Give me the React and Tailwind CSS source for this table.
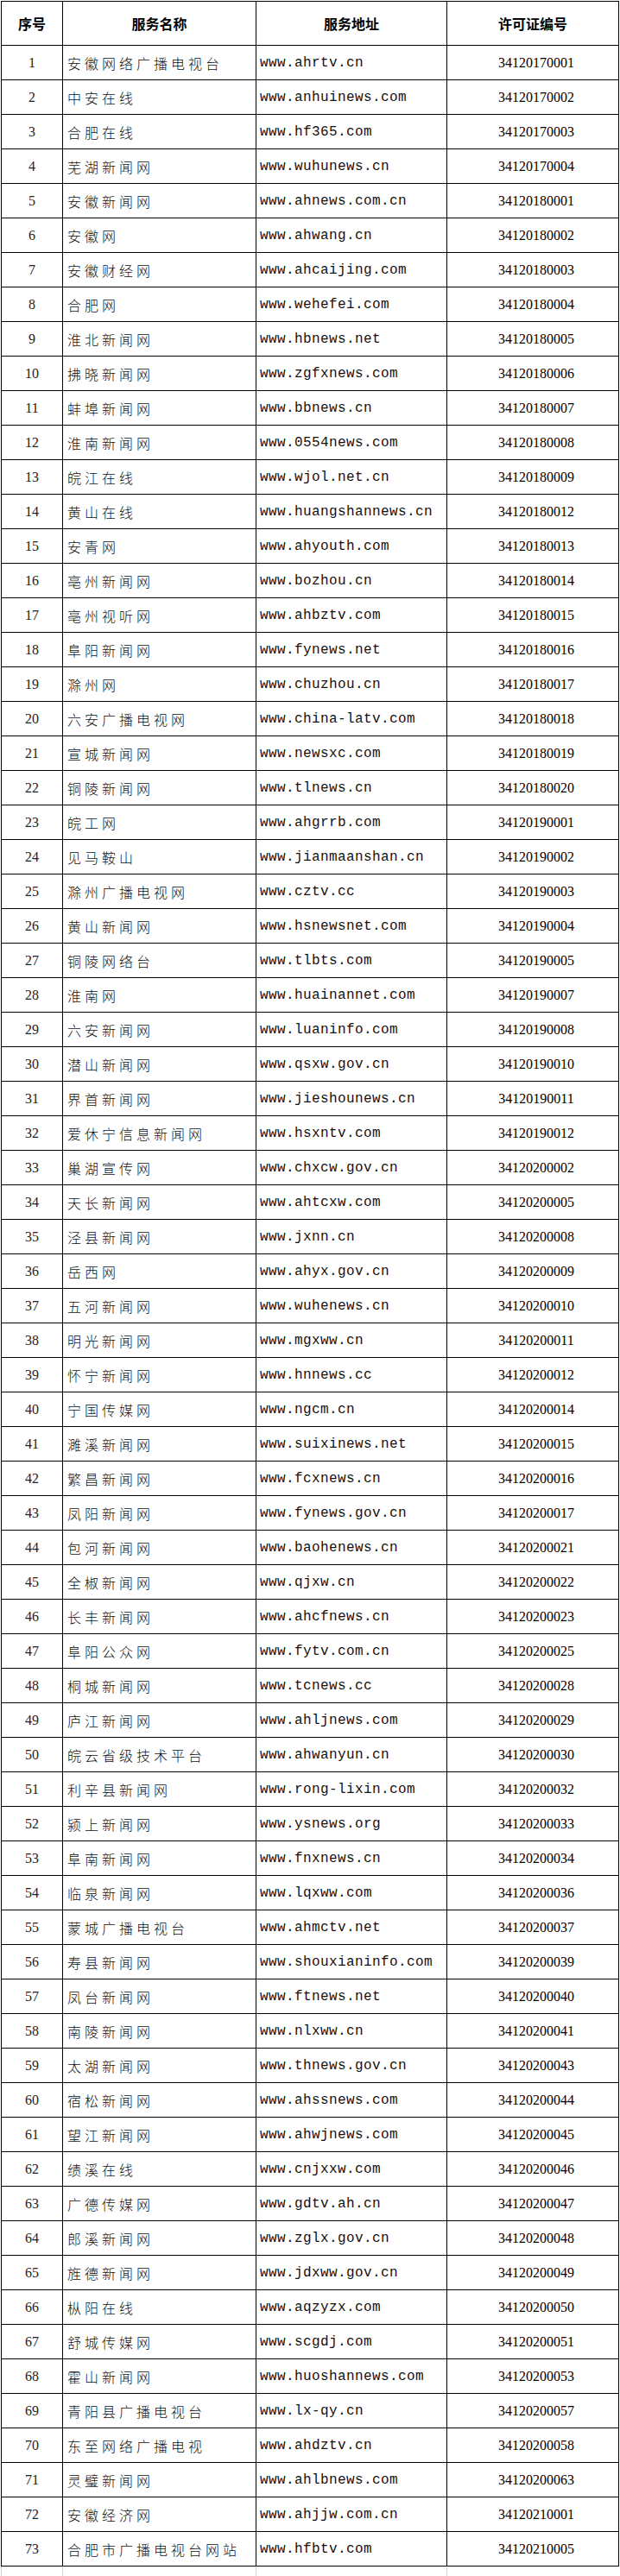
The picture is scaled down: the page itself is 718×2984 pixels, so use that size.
import React from 'react';

const rows = [
    ['安徽网络广播电视台', 'www.ahrtv.cn', '34120170001'],
    ['中安在线', 'www.anhuinews.com', '34120170002'],
    ['合肥在线', 'www.hf365.com', '34120170003'],
    ['芜湖新闻网', 'www.wuhunews.cn', '34120170004'],
    ['安徽新闻网', 'www.ahnews.com.cn', '34120180001'],
    ['安徽网', 'www.ahwang.cn', '34120180002'],
    ['安徽财经网', 'www.ahcaijing.com', '34120180003'],
    ['合肥网', 'www.wehefei.com', '34120180004'],
    ['淮北新闻网', 'www.hbnews.net', '34120180005'],
    ['拂晓新闻网', 'www.zgfxnews.com', '34120180006'],
    ['蚌埠新闻网', 'www.bbnews.cn', '34120180007'],
    ['淮南新闻网', 'www.0554news.com', '34120180008'],
    ['皖江在线', 'www.wjol.net.cn', '34120180009'],
    ['黄山在线', 'www.huangshannews.cn', '34120180012'],
    ['安青网', 'www.ahyouth.com', '34120180013'],
    ['亳州新闻网', 'www.bozhou.cn', '34120180014'],
    ['亳州视听网', 'www.ahbztv.com', '34120180015'],
    ['阜阳新闻网', 'www.fynews.net', '34120180016'],
    ['滁州网', 'www.chuzhou.cn', '34120180017'],
    ['六安广播电视网', 'www.china-latv.com', '34120180018'],
    ['宣城新闻网', 'www.newsxc.com', '34120180019'],
    ['铜陵新闻网', 'www.tlnews.cn', '34120180020'],
    ['皖工网', 'www.ahgrrb.com', '34120190001'],
    ['见马鞍山', 'www.jianmaanshan.cn', '34120190002'],
    ['滁州广播电视网', 'www.cztv.cc', '34120190003'],
    ['黄山新闻网', 'www.hsnewsnet.com', '34120190004'],
    ['铜陵网络台', 'www.tlbts.com', '34120190005'],
    ['淮南网', 'www.huainannet.com', '34120190007'],
    ['六安新闻网', 'www.luaninfo.com', '34120190008'],
    ['潜山新闻网', 'www.qsxw.gov.cn', '34120190010'],
    ['界首新闻网', 'www.jieshounews.cn', '34120190011'],
    ['爱休宁信息新闻网', 'www.hsxntv.com', '34120190012'],
    ['巢湖宣传网', 'www.chxcw.gov.cn', '34120200002'],
    ['天长新闻网', 'www.ahtcxw.com', '34120200005'],
    ['泾县新闻网', 'www.jxnn.cn', '34120200008'],
    ['岳西网', 'www.ahyx.gov.cn', '34120200009'],
    ['五河新闻网', 'www.wuhenews.cn', '34120200010'],
    ['明光新闻网', 'www.mgxww.cn', '34120200011'],
    ['怀宁新闻网', 'www.hnnews.cc', '34120200012'],
    ['宁国传媒网', 'www.ngcm.cn', '34120200014'],
    ['濉溪新闻网', 'www.suixinews.net', '34120200015'],
    ['繁昌新闻网', 'www.fcxnews.cn', '34120200016'],
    ['凤阳新闻网', 'www.fynews.gov.cn', '34120200017'],
    ['包河新闻网', 'www.baohenews.cn', '34120200021'],
    ['全椒新闻网', 'www.qjxw.cn', '34120200022'],
    ['长丰新闻网', 'www.ahcfnews.cn', '34120200023'],
    ['阜阳公众网', 'www.fytv.com.cn', '34120200025'],
    ['桐城新闻网', 'www.tcnews.cc', '34120200028'],
    ['庐江新闻网', 'www.ahljnews.com', '34120200029'],
    ['皖云省级技术平台', 'www.ahwanyun.cn', '34120200030'],
    ['利辛县新闻网', 'www.rong-lixin.com', '34120200032'],
    ['颍上新闻网', 'www.ysnews.org', '34120200033'],
    ['阜南新闻网', 'www.fnxnews.cn', '34120200034'],
    ['临泉新闻网', 'www.lqxww.com', '34120200036'],
    ['蒙城广播电视台', 'www.ahmctv.net', '34120200037'],
    ['寿县新闻网', 'www.shouxianinfo.com', '34120200039'],
    ['凤台新闻网', 'www.ftnews.net', '34120200040'],
    ['南陵新闻网', 'www.nlxww.cn', '34120200041'],
    ['太湖新闻网', 'www.thnews.gov.cn', '34120200043'],
    ['宿松新闻网', 'www.ahssnews.com', '34120200044'],
    ['望江新闻网', 'www.ahwjnews.com', '34120200045'],
    ['绩溪在线', 'www.cnjxxw.com', '34120200046'],
    ['广德传媒网', 'www.gdtv.ah.cn', '34120200047'],
    ['郎溪新闻网', 'www.zglx.gov.cn', '34120200048'],
    ['旌德新闻网', 'www.jdxww.gov.cn', '34120200049'],
    ['枞阳在线', 'www.aqzyzx.com', '34120200050'],
    ['舒城传媒网', 'www.scgdj.com', '34120200051'],
    ['霍山新闻网', 'www.huoshannews.com', '34120200053'],
    ['青阳县广播电视台', 'www.lx-qy.cn', '34120200057'],
    ['东至网络广播电视', 'www.ahdztv.cn', '34120200058'],
    ['灵璧新闻网', 'www.ahlbnews.com', '34120200063'],
    ['安徽经济网', 'www.ahjjw.com.cn', '34120210001'],
    ['合肥市广播电视台网站', 'www.hfbtv.com', '34120210005'],
];

const cols = 'grid grid-cols-[71px_224px_221px_199px]';
const cell = 'flex items-center border-r border-b border-black';

function App() {
    return (
        <div className="bg-white min-h-[2984px] pt-px pl-px">
            <div className={`${cols} w-[716px] border-l border-t border-black`}>
                {['序号', '服务名称', '服务地址', '许可证编号'].map((h) => (
                    <div
                        key={h}
                        className={`${cell} h-[51px] justify-center font-['Noto_Sans_CJK_SC',sans-serif] font-bold text-[16px] text-black`}
                    >
                        {h}
                    </div>
                ))}
                {rows.map(([name, url, code], i) => (
                    <React.Fragment key={code}>
                        <div className={`${cell} h-[40px] justify-center font-['Liberation_Serif',serif] text-[16px] text-[#222]`}>
                            {i + 1}
                        </div>
                        <div className={`${cell} h-[40px] pl-[5px] font-['Noto_Sans_CJK_SC',sans-serif] font-light tracking-[4px] text-[16px] text-[#111] whitespace-nowrap`}>
                            {name}
                        </div>
                        <div className={`${cell} h-[40px] pl-[4px] font-['Liberation_Mono',monospace] tracking-[0.4px] text-[16px] text-[#111] whitespace-nowrap`}>
                            {url}
                        </div>
                        <div className={`${cell} h-[40px] justify-center pl-[8px] font-['Liberation_Serif',serif] text-[16px] text-black`}>
                            {code}
                        </div>
                    </React.Fragment>
                ))}
            </div>
            <div className={`${cols} w-[716px] h-[11px] border-l border-[#d4d4d4]`}>
                <div className="border-r border-[#d4d4d4]" />
                <div className="border-r border-[#d4d4d4]" />
                <div className="border-r border-[#d4d4d4]" />
                <div />
            </div>
        </div>
    );
}

export default App;
